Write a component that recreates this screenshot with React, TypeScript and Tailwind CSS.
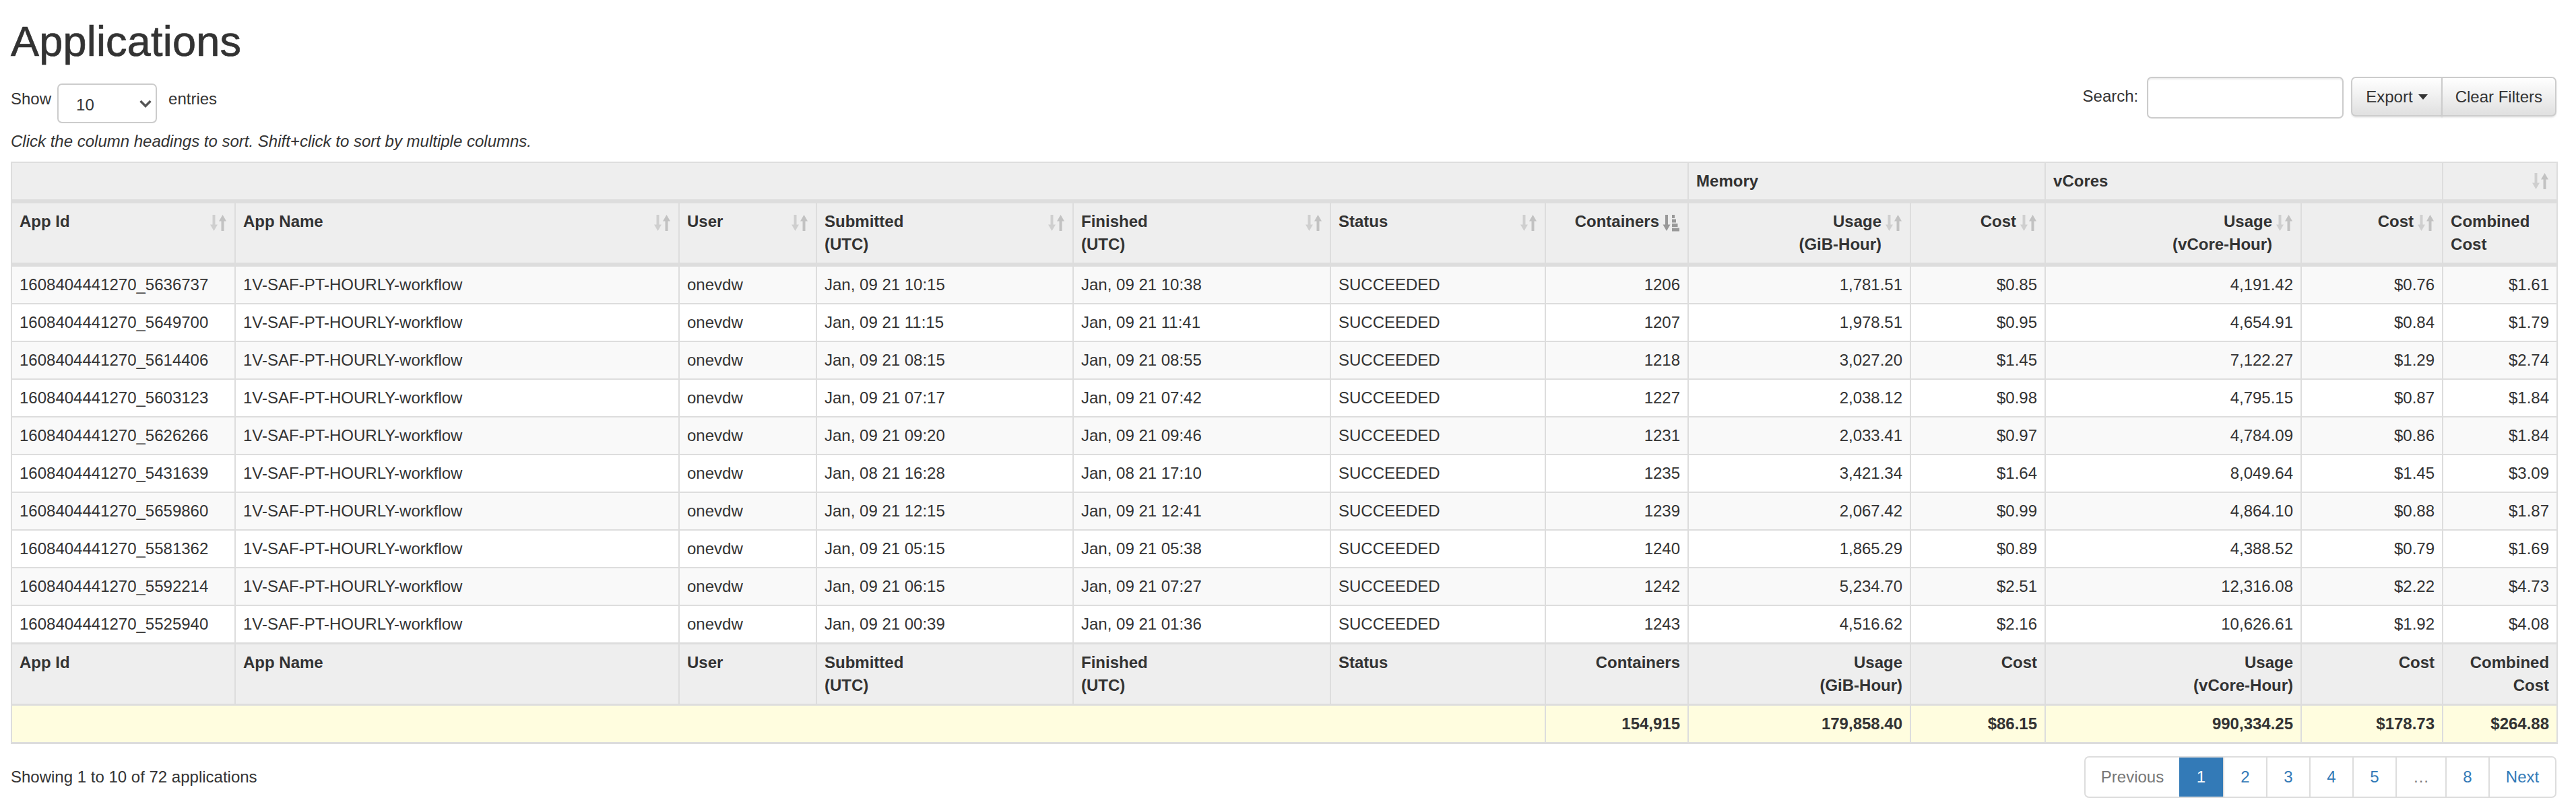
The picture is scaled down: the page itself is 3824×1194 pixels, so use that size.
import React from "react";

const rows = [
  ["1608404441270_5636737", "Jan, 09 21 10:15", "Jan, 09 21 10:38", "1206", "1,781.51", "$0.85", "4,191.42", "$0.76", "$1.61"],
  ["1608404441270_5649700", "Jan, 09 21 11:15", "Jan, 09 21 11:41", "1207", "1,978.51", "$0.95", "4,654.91", "$0.84", "$1.79"],
  ["1608404441270_5614406", "Jan, 09 21 08:15", "Jan, 09 21 08:55", "1218", "3,027.20", "$1.45", "7,122.27", "$1.29", "$2.74"],
  ["1608404441270_5603123", "Jan, 09 21 07:17", "Jan, 09 21 07:42", "1227", "2,038.12", "$0.98", "4,795.15", "$0.87", "$1.84"],
  ["1608404441270_5626266", "Jan, 09 21 09:20", "Jan, 09 21 09:46", "1231", "2,033.41", "$0.97", "4,784.09", "$0.86", "$1.84"],
  ["1608404441270_5431639", "Jan, 08 21 16:28", "Jan, 08 21 17:10", "1235", "3,421.34", "$1.64", "8,049.64", "$1.45", "$3.09"],
  ["1608404441270_5659860", "Jan, 09 21 12:15", "Jan, 09 21 12:41", "1239", "2,067.42", "$0.99", "4,864.10", "$0.88", "$1.87"],
  ["1608404441270_5581362", "Jan, 09 21 05:15", "Jan, 09 21 05:38", "1240", "1,865.29", "$0.89", "4,388.52", "$0.79", "$1.69"],
  ["1608404441270_5592214", "Jan, 09 21 06:15", "Jan, 09 21 07:27", "1242", "5,234.70", "$2.51", "12,316.08", "$2.22", "$4.73"],
  ["1608404441270_5525940", "Jan, 09 21 00:39", "Jan, 09 21 01:36", "1243", "4,516.62", "$2.16", "10,626.61", "$1.92", "$4.08"],
];

function SortIcon({ top = "top-[16px]" }: { top?: string }) {
  return (
    <svg width="26" height="26" viewBox="0 0 26 26" className={`absolute right-[11px] ${top}`}>
      <rect x="4.5" y="1" width="4" height="16" fill="#cfcfcf" />
      <path d="M1 15.5h11l-5.5 9.5z" fill="#cfcfcf" />
      <rect x="17.5" y="9" width="4" height="16" fill="#c2c2c2" />
      <path d="M14 10.5h11l-5.5-9.5z" fill="#c2c2c2" />
    </svg>
  );
}

function SortedIcon() {
  return (
    <svg width="26" height="26" viewBox="0 0 26 26" className="absolute right-[11px] top-[16px]">
      <rect x="4" y="1" width="4" height="16" fill="#999" />
      <path d="M0.5 15.5h11l-5.5 9.5z" fill="#999" />
      <rect x="14" y="1" width="4" height="5" fill="#999" />
      <rect x="14" y="7.5" width="6" height="5" fill="#999" />
      <rect x="14" y="14" width="8.5" height="5" fill="#999" />
      <rect x="14" y="20.5" width="11" height="5" fill="#999" />
    </svg>
  );
}

const cell = "border-2 border-[#ddd] px-[11px] py-[10px] leading-[34px] align-top";
const head = `${cell} relative bg-[#eee] font-bold text-left border-b-[6px]`;
const foot = `${cell} bg-[#eee] font-bold text-left border-t-[3px] border-b-[3px]`;
const page = "flex items-center justify-center border-l-2 border-[#ddd]";

export default function App() {
  return (
    <div className="min-h-screen bg-white pl-[16px] pr-[29px] pt-[27px] font-['Liberation_Sans',Arial,sans-serif] text-[24px] text-[#333]">
      <h1 className="m-0 text-[63px] leading-[68px] font-medium tracking-[0.2px] [-webkit-text-stroke:0.7px_#333]">Applications</h1>

      <div className="mt-[19px] flex items-start justify-between">
        <div className="flex items-start pt-[10px]">
          <span className="mt-[6px] leading-[34px]">Show</span>
          <div className="ml-[9px] mr-[17px] flex h-[59px] w-[148px] items-center justify-between rounded-[7px] border-2 border-[#ccc] bg-white pl-[26px] pr-[5px]">
            <span className="mt-[5px]">10</span>
            <svg width="20" height="14" viewBox="0 0 20 14">
              <path d="M2.5 3l7.5 7.5 7.5-7.5" fill="none" stroke="#555" strokeWidth="3.5" />
            </svg>
          </div>
          <span className="mt-[6px] leading-[34px]">entries</span>
        </div>

        <div className="flex items-start">
          <span className="mt-[12px] leading-[34px]">Search:</span>
          <div className="ml-[13px] h-[62px] w-[292px] rounded-[7px] border-2 border-[#ccc] bg-white shadow-[inset_0_2px_2px_rgba(0,0,0,0.075)]" />
          <div className="ml-[11px] flex">
            <button className="flex h-[59px] items-center gap-[8px] rounded-l-[7px] border-2 border-[#ccc] bg-linear-to-b from-white to-[#e0e0e0] px-[20px] shadow-[0_2px_2px_rgba(0,0,0,0.08)]">
              Export
              <span className="h-0 w-0 border-x-[7px] border-t-[8px] border-x-transparent border-t-[#333]" />
            </button>
            <button className="-ml-[2px] flex h-[59px] items-center rounded-r-[7px] border-2 border-[#ccc] bg-linear-to-b from-white to-[#e0e0e0] px-[19px] shadow-[0_2px_2px_rgba(0,0,0,0.08)]">
              Clear Filters
            </button>
          </div>
        </div>
      </div>

      <p className="mt-[10px] italic leading-[34px]">
        Click the column headings to sort. Shift+click to sort by multiple columns.
      </p>

      <table className="mt-[13px] w-full table-fixed border-collapse border-2 border-[#ddd]">
        <colgroup>
          <col className="w-[332px]" />
          <col className="w-[659px]" />
          <col className="w-[204px]" />
          <col className="w-[381px]" />
          <col className="w-[382px]" />
          <col className="w-[319px]" />
          <col className="w-[212px]" />
          <col className="w-[330px]" />
          <col className="w-[200px]" />
          <col className="w-[380px]" />
          <col className="w-[210px]" />
          <col className="w-[170px]" />
        </colgroup>
        <thead>
          <tr>
            <th colSpan={7} className={head} />
            <th colSpan={2} className={head}>Memory</th>
            <th colSpan={2} className={head}>vCores</th>
            <th className={head}>
              &nbsp;
              <SortIcon top="top-[14px]" />
            </th>
          </tr>
          <tr>
            <th className={head}>App Id<SortIcon /></th>
            <th className={head}>App Name<SortIcon /></th>
            <th className={head}>User<SortIcon /></th>
            <th className={head}>Submitted<br />(UTC)<SortIcon /></th>
            <th className={head}>Finished<br />(UTC)<SortIcon /></th>
            <th className={head}>Status<SortIcon /></th>
            <th className={`${head} !text-right pr-[42px]`}>Containers<SortedIcon /></th>
            <th className={`${head} !text-right pr-[42px]`}>Usage<br />(GiB-Hour)<SortIcon /></th>
            <th className={`${head} !text-right pr-[42px]`}>Cost<SortIcon /></th>
            <th className={`${head} !text-right pr-[42px]`}>Usage<br />(vCore-Hour)<SortIcon /></th>
            <th className={`${head} !text-right pr-[42px]`}>Cost<SortIcon /></th>
            <th className={head}>Combined<br />Cost</th>
          </tr>
        </thead>
        <tbody>
          {rows.map((r, i) => (
            <tr key={r[0]} className={i % 2 === 0 ? "bg-[#f9f9f9]" : "bg-white"}>
              <td className={cell}>{r[0]}</td>
              <td className={cell}>1V-SAF-PT-HOURLY-workflow</td>
              <td className={cell}>onevdw</td>
              <td className={cell}>{r[1]}</td>
              <td className={cell}>{r[2]}</td>
              <td className={cell}>SUCCEEDED</td>
              {r.slice(3).map((v, j) => (
                <td key={j} className={`${cell} text-right`}>{v}</td>
              ))}
            </tr>
          ))}
        </tbody>
        <tfoot>
          <tr>
            <th className={foot}>App Id</th>
            <th className={foot}>App Name</th>
            <th className={foot}>User</th>
            <th className={foot}>Submitted<br />(UTC)</th>
            <th className={foot}>Finished<br />(UTC)</th>
            <th className={foot}>Status</th>
            <th className={`${foot} !text-right`}>Containers</th>
            <th className={`${foot} !text-right`}>Usage<br />(GiB-Hour)</th>
            <th className={`${foot} !text-right`}>Cost</th>
            <th className={`${foot} !text-right`}>Usage<br />(vCore-Hour)</th>
            <th className={`${foot} !text-right`}>Cost</th>
            <th className={`${foot} !text-right`}>Combined<br />Cost</th>
          </tr>
          <tr className="bg-[#fffddf] font-bold">
            <td colSpan={6} className={`${cell} border-b-[3px]`}>&nbsp;</td>
            <td className={`${cell} border-b-[3px] text-right`}>154,915</td>
            <td className={`${cell} border-b-[3px] text-right`}>179,858.40</td>
            <td className={`${cell} border-b-[3px] text-right`}>$86.15</td>
            <td className={`${cell} border-b-[3px] text-right`}>990,334.25</td>
            <td className={`${cell} border-b-[3px] text-right`}>$178.73</td>
            <td className={`${cell} border-b-[3px] text-right`}>$264.88</td>
          </tr>
        </tfoot>
      </table>

      <div className="mt-[18px] flex items-center justify-between">
        <span className="leading-[34px]">Showing 1 to 10 of 72 applications</span>
        <ul className="flex h-[62px] overflow-hidden rounded-[7px] border-2 border-[#ddd]">
          <li className="flex w-[139px] items-center justify-center text-[#777]">Previous</li>
          <li className="flex w-[65px] items-center justify-center bg-[#337ab7] text-white">1</li>
          {["2", "3", "4", "5"].map((p) => (
            <li key={p} className={`${page} w-[64px] text-[#337ab7]`}>{p}</li>
          ))}
          <li className={`${page} w-[74px] text-[#777]`}>…</li>
          <li className={`${page} w-[64px] text-[#337ab7]`}>8</li>
          <li className={`${page} w-[99px] text-[#337ab7]`}>Next</li>
        </ul>
      </div>
    </div>
  );
}
